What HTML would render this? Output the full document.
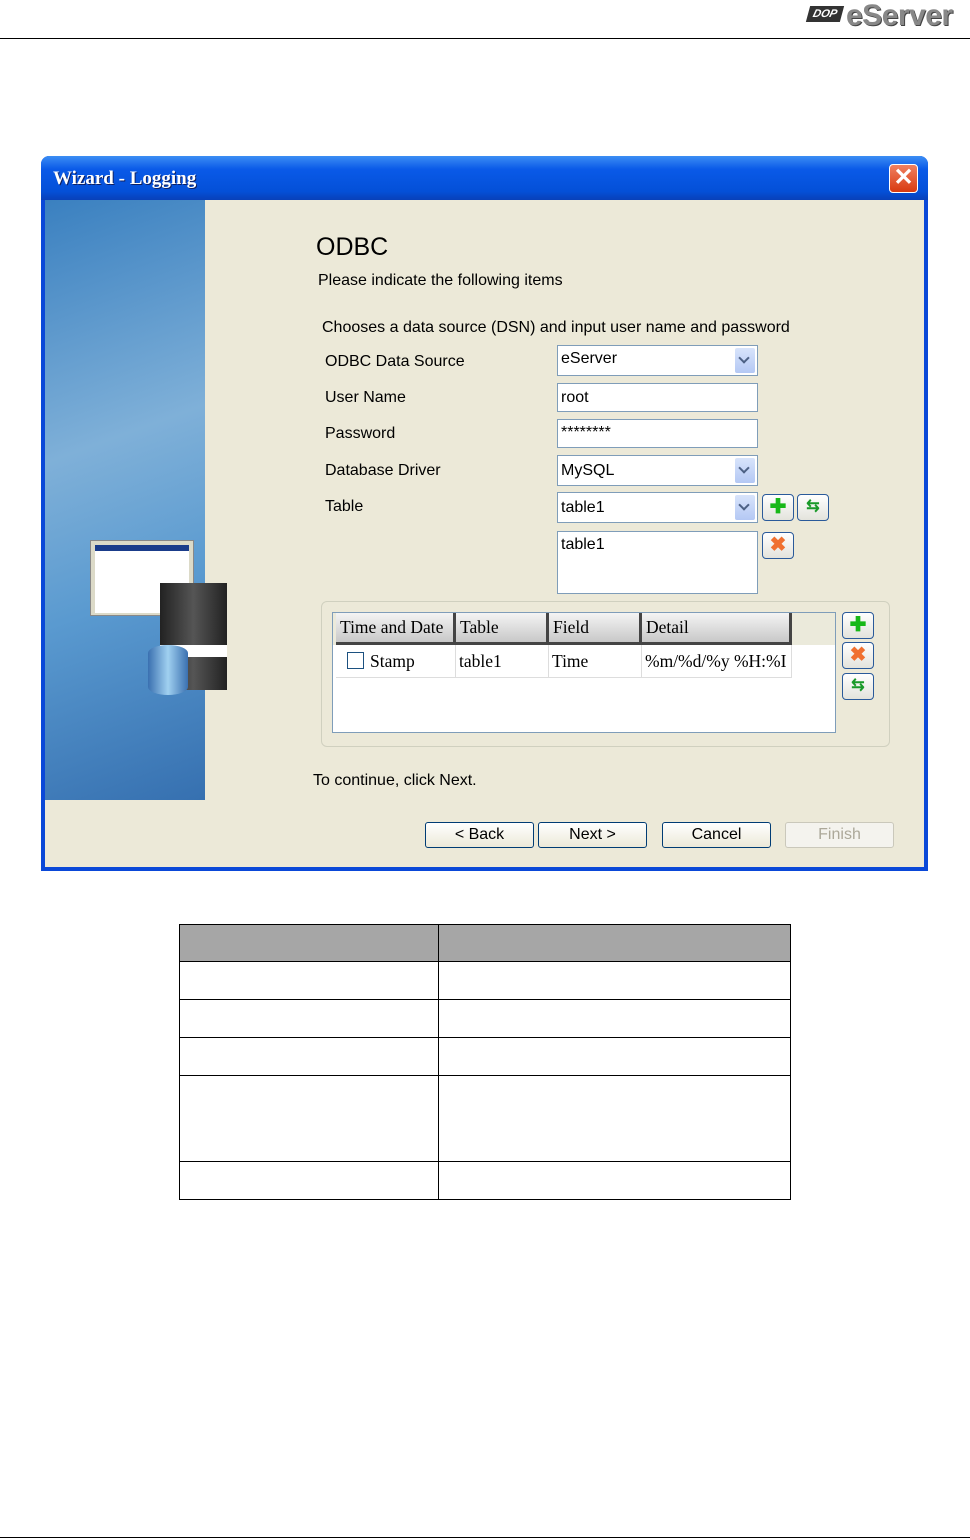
<!DOCTYPE html>
<html><head><style>
body{margin:0;width:970px;height:1540px;background:#fff;position:relative;font-family:"Liberation Sans",sans-serif;overflow:hidden}
.a{position:absolute}
.t{font-size:16px;color:#000;position:absolute;white-space:nowrap}
.inp{position:absolute;background:#fff;border:1px solid #7f9db9;font-size:16px;box-sizing:border-box;padding:4px 3px}
.dd{position:absolute;right:2px;top:2px;width:20px;bottom:2px;background:linear-gradient(#d8e4fb,#b4c8f4);border-radius:2px}
.dd:after{content:"";position:absolute;left:5px;top:6px;width:6px;height:6px;border-right:2px solid #4d6185;border-bottom:2px solid #4d6185;transform:rotate(45deg)}
.btn{position:absolute;height:26px;box-sizing:border-box;border:1px solid #003c74;border-radius:3px;background:linear-gradient(#fff,#ece9d8);font-size:16px;text-align:center;line-height:24px}
.ib{position:absolute;width:32px;height:27px;box-sizing:border-box;border:1px solid #2a5a9a;border-radius:4px;background:linear-gradient(#fff,#e3e3dc);font-weight:bold;font-size:20px;text-align:center;line-height:24px}
.th{position:absolute;top:0;height:32px;background:linear-gradient(#f4f4f4,#c8c8c8);border-right:3px solid #444;border-bottom:3px solid #444;box-sizing:border-box;font-family:"Liberation Serif",serif;font-size:17.5px;padding:4px 4px;white-space:nowrap}
.td{position:absolute;top:32px;height:33px;border-right:1px solid #ddd;border-bottom:1px solid #ddd;box-sizing:border-box;font-family:"Liberation Serif",serif;font-size:17.5px;padding:6px 3px;white-space:nowrap}
table{position:absolute;left:179px;top:924px;border-collapse:collapse}
td{border:1px solid #000;padding:0}
</style></head><body>
<div class="a" style="left:0;top:38px;width:970px;height:1px;background:#000"></div>
<div class="a" style="left:808px;top:6px;width:34px;height:16px;background:#333;transform:skewX(-15deg);color:#fff;font:italic bold 11px 'Liberation Sans';text-align:center;line-height:16px">DOP</div>
<div class="a" style="left:846px;top:-1px;font:bold 30px 'Liberation Sans';color:#888;letter-spacing:-0.5px;text-shadow:1px 1px 0 #444">eServer</div>

<div class="a" style="left:41px;top:156px;width:887px;height:715px;background:#0a48d8;border-radius:8px 8px 0 0"></div>
<div class="a" style="left:41px;top:156px;width:887px;height:44px;background:linear-gradient(#3c8ef4,#0a5ae8 30%,#0450d8 80%,#0840b8);border-radius:8px 8px 0 0"></div>
<div class="a" style="left:53px;top:168px;color:#fff;font:bold 19px 'Liberation Serif',serif;text-shadow:1px 1px 0 #102060">Wizard - Logging</div>
<div class="a" style="left:889px;top:164px;width:29px;height:29px;background:linear-gradient(#f08060,#d83a10);border:1px solid #fff;border-radius:4px;box-sizing:border-box;color:#fff;font:bold 24px 'Liberation Sans';text-align:center;line-height:26px">✕</div>
<div class="a" style="left:45px;top:200px;width:879px;height:667px;background:#ece9d8"></div>
<div class="a" style="left:45px;top:200px;width:160px;height:600px;background:linear-gradient(160deg,#3a80c0,#7fb0d8 40%,#5a9ad0 65%,#3670b0)"></div>
<div class="a" style="left:90px;top:540px;width:102px;height:74px;background:#dcdac8;border:1px solid #888"><div style="margin:4px;height:62px;background:#fff;border-top:6px solid #1a3c8a"></div></div>
<div class="a" style="left:160px;top:583px;width:67px;height:107px;background:linear-gradient(90deg,#222,#555,#222)"></div>
<div class="a" style="left:160px;top:645px;width:67px;height:12px;background:#fff"></div>
<div class="a" style="left:148px;top:645px;width:40px;height:50px;background:linear-gradient(90deg,#3a70b0,#a0d0f0,#3a70b0);border-radius:20px/8px"></div>

<div class="t" style="left:316px;top:233px;font-size:25px">ODBC</div>
<div class="t" style="left:318px;top:272px">Please indicate the following items</div>
<div class="t" style="left:322px;top:319px">Chooses a data source (DSN) and input user name and password</div>
<div class="t" style="left:325px;top:353px">ODBC Data Source</div>
<div class="t" style="left:325px;top:389px">User Name</div>
<div class="t" style="left:325px;top:425px">Password</div>
<div class="t" style="left:325px;top:462px">Database Driver</div>
<div class="t" style="left:325px;top:498px">Table</div>
<div class="inp" style="left:557px;top:345px;width:201px;height:31px">eServer<div class="dd"></div></div>
<div class="inp" style="left:557px;top:383px;width:201px;height:29px;padding-top:5px">root</div>
<div class="inp" style="left:557px;top:419px;width:201px;height:29px">********</div>
<div class="inp" style="left:557px;top:455px;width:201px;height:31px;padding-top:6px">MySQL<div class="dd"></div></div>
<div class="inp" style="left:557px;top:492px;width:201px;height:31px;padding-top:6px">table1<div class="dd"></div></div>
<div class="inp" style="left:557px;top:531px;width:201px;height:63px">table1</div>
<div class="ib" style="left:762px;top:494px;color:#18b818">✚</div>
<div class="ib" style="left:797px;top:494px;color:#1a9a2a;font-size:16px">⇆</div>
<div class="ib" style="left:762px;top:532px;color:#f07030">✖</div>

<div class="a" style="left:321px;top:601px;width:567px;height:144px;border:1px solid #d0d0bf;border-radius:6px"></div>
<div class="a" style="left:332px;top:612px;width:504px;height:121px;background:#fff;border:1px solid #7f9db9;box-sizing:border-box;overflow:hidden">
<div class="a" style="left:0;top:0;width:504px;height:32px;background:#ebeadb"></div>
<div class="th" style="left:3px;width:120px">Time and Date</div>
<div class="th" style="left:123px;width:93px">Table</div>
<div class="th" style="left:216px;width:93px">Field</div>
<div class="th" style="left:309px;width:150px">Detail</div>
<div class="td" style="left:3px;width:120px"><span style="display:inline-block;width:15px;height:15px;border:1px solid #1c5180;vertical-align:-2px;margin:0 6px 0 8px"></span>Stamp</div>
<div class="td" style="left:123px;width:93px">table1</div>
<div class="td" style="left:216px;width:93px">Time</div>
<div class="td" style="left:309px;width:150px;overflow:hidden">%m/%d/%y %H:%I</div>
</div>
<div class="ib" style="left:842px;top:612px;color:#18b818">✚</div>
<div class="ib" style="left:842px;top:642px;color:#f07030">✖</div>
<div class="ib" style="left:842px;top:673px;color:#1a9a2a;font-size:16px">⇆</div>

<div class="t" style="left:313px;top:772px">To continue, click Next.</div>
<div class="btn" style="left:425px;top:822px;width:109px">&lt; Back</div>
<div class="btn" style="left:538px;top:822px;width:109px">Next &gt;</div>
<div class="btn" style="left:662px;top:822px;width:109px">Cancel</div>
<div class="btn" style="left:785px;top:822px;width:109px;border-color:#cac8bb;color:#aca899;background:#f4f3ee">Finish</div>

<table>
<tr style="height:37px;background:#a6a6a6"><td style="width:258px"></td><td style="width:351px"></td></tr>
<tr style="height:38px"><td></td><td></td></tr>
<tr style="height:38px"><td></td><td></td></tr>
<tr style="height:38px"><td></td><td></td></tr>
<tr style="height:86px"><td></td><td></td></tr>
<tr style="height:38px"><td></td><td></td></tr>
</table>
<div class="a" style="left:0;top:1537px;width:970px;height:1px;background:#000"></div>
</body></html>
